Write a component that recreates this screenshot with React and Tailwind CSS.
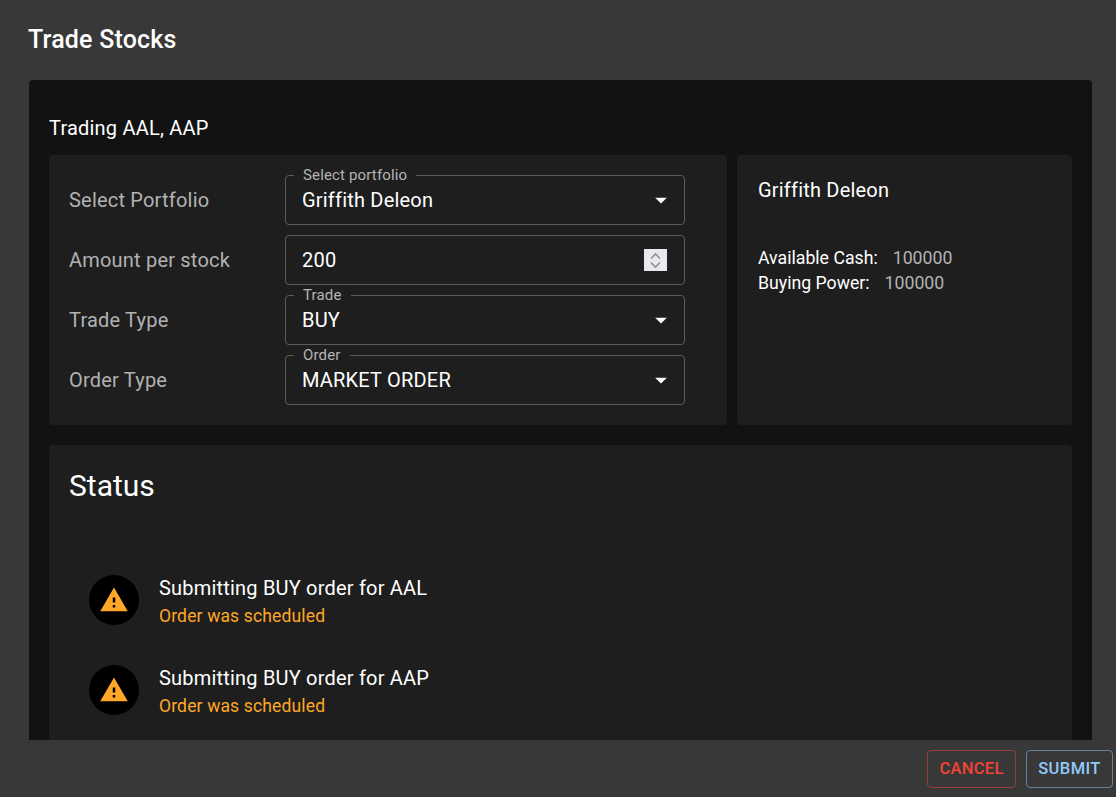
import React from "react";

function Caret() {
  return (
    <svg className="w-[28px] h-[28px] fill-white mr-[-8px]" viewBox="0 0 24 24"><path d="M7 10l5 5 5-5z" /></svg>
  );
}

function Field({ label, value, caret, spinner }) {
  return (
    <div className="relative w-[400px] h-[50px] rounded border border-[#5c5c5c] flex items-center justify-between pl-[16px] pr-[17px]">
      {label && (
        <span className="absolute left-[8px] top-[-9px] bg-[#1e1e1e] px-[9px] text-[15px] tracking-[0.15px] leading-[16px] text-[#b4b4b4]">{label}</span>
      )}
      <span className="text-[20px] tracking-[0.2px] leading-[24px] text-white">{value}</span>
      {caret && <Caret />}
      {spinner && (
        <div className="w-[23px] h-[22px] bg-[#e9e9ed] flex flex-col items-center justify-center">
          <svg className="w-[11px] h-[8px]" viewBox="0 0 11 8" fill="none" stroke="#8f8f9d" strokeWidth="1.6"><path d="M1 6.5L5.5 2 10 6.5" /></svg>
          <svg className="w-[11px] h-[8px] mt-[1px]" viewBox="0 0 11 8" fill="none" stroke="#8f8f9d" strokeWidth="1.6"><path d="M1 1.5L5.5 6 10 1.5" /></svg>
        </div>
      )}
    </div>
  );
}

function Row({ name, ...rest }) {
  return (
    <div className="flex items-center">
      <div className="w-[236px] pl-[20px] text-[20px] tracking-[0.2px] text-[#b2b2b2]">{name}</div>
      <Field {...rest} />
    </div>
  );
}

function Status({ stock }) {
  return (
    <div className="flex items-center gap-[20px] h-[50px]">
      <div className="w-[50px] h-[50px] rounded-full bg-black flex items-center justify-center">
        <svg className="w-[30px] h-[30px] fill-[#ffa726]" viewBox="0 0 24 24"><path d="M1 21h22L12 2 1 21zm12-3h-2v-2h2v2zm0-4h-2v-4h2v4z" /></svg>
      </div>
      <div className="pt-[3px]">
        <div className="text-[20px] tracking-[0.2px] leading-[28px] text-white">Submitting BUY order for {stock}</div>
        <div className="text-[17.5px] tracking-[0.15px] leading-[28px] text-[#ffa726]">Order was scheduled</div>
      </div>
    </div>
  );
}

export default function App() {
  return (
    <div className="w-[1116px] h-[797px] overflow-hidden flex flex-col bg-[#383838] font-['Roboto',sans-serif]">
      <div className="h-[80px] shrink-0 pl-[28px] pt-[24px] text-[25px] tracking-[0.2px] leading-[32px] font-medium text-white">Trade Stocks</div>
      <div className="flex-1 min-h-0 overflow-hidden ml-[29px] mr-[24px] rounded-t bg-[#121212] px-[20px] pt-[36px]">
        <div className="text-[20px] tracking-[0.2px] leading-[24px] text-white h-[39px]">Trading AAL, AAP</div>
        <div className="flex gap-[10px]">
          <div className="w-[678px] h-[270px] rounded bg-[#1e1e1e] py-[20px] flex flex-col gap-[10px]">
            <Row name="Select Portfolio" label="Select portfolio" value="Griffith Deleon" caret />
            <Row name="Amount per stock" value="200" spinner />
            <Row name="Trade Type" label="Trade" value="BUY" caret />
            <Row name="Order Type" label="Order" value="MARKET ORDER" caret />
          </div>
          <div className="flex-1 h-[270px] rounded bg-[#1e1e1e] px-[21px] pt-[21px]">
            <div className="text-[20px] tracking-[0.2px] leading-[28px] text-white">Griffith Deleon</div>
            <div className="mt-[42px] text-[17.7px] leading-[25px] text-white flex gap-[15px]"><span>Available Cash:</span><span className="text-[#b4b4b4]">100000</span></div>
            <div className="text-[17.7px] leading-[25px] text-white flex gap-[15px]"><span>Buying Power:</span><span className="text-[#b4b4b4]">100000</span></div>
          </div>
        </div>
        <div className="mt-[20px] rounded bg-[#1e1e1e] h-[400px] pl-[20px] pt-[21px]">
          <div className="text-[30px] leading-[40px] text-white">Status</div>
          <div className="mt-[69px] ml-[20px] flex flex-col gap-[40px]">
            <Status stock="AAL" />
            <Status stock="AAP" />
          </div>
        </div>
      </div>
      <div className="h-[57px] shrink-0 flex items-start justify-end gap-[10px] pt-[10px] pr-[3px]">
        <button className="w-[89px] h-[38px] rounded border border-[#f4433680] text-[#f44336] text-[16.5px] font-medium tracking-[0.3px]">CANCEL</button>
        <button className="w-[87px] h-[38px] rounded border border-[#90caf980] text-[#90caf9] text-[16.5px] font-medium tracking-[0.4px]">SUBMIT</button>
      </div>
    </div>
  );
}
